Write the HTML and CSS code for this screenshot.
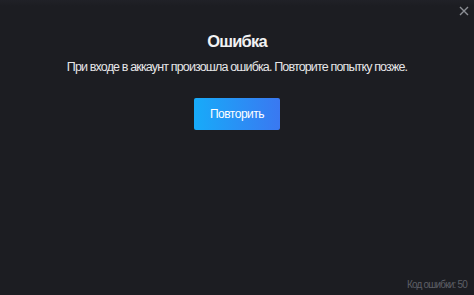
FILE: index.html
```html
<!DOCTYPE html>
<html lang="ru">
<head>
<meta charset="utf-8">
<link rel="stylesheet" href="styles.css">
</head>
<body>
<div class="dialog">
  <button class="close" aria-label="Закрыть">
    <svg width="10" height="10" viewBox="0 0 10 10"><path d="M1 1 L9 9 M9 1 L1 9" stroke="#8c8f95" stroke-width="1.4" fill="none"/></svg>
  </button>
  <div class="content">
    <h1 class="title">Ошибка</h1>
    <p class="message">При входе в аккаунт произошла ошибка. Повторите попытку позже.</p>
    <button class="retry">Повторить</button>
  </div>
  <div class="code">Код ошибки: 50</div>
</div>
</body>
</html>
```
FILE: styles.css
```css
html, body {
  margin: 0;
  padding: 0;
  height: 100%;
}
body {
  background: #1c1d22;
  font-family: "Liberation Sans", Arial, sans-serif;
}
.dialog {
  position: relative;
  height: 295px;
  background: linear-gradient(#202127 0, #1c1d22 6px);
  display: flex;
  flex-direction: column;
}
.close {
  position: absolute;
  top: 5px;
  right: 4px;
  width: 12px;
  height: 12px;
  padding: 0;
  border: 0;
  background: none;
  display: flex;
  align-items: center;
  justify-content: center;
}
.content {
  display: flex;
  flex-direction: column;
  align-items: center;
  padding-top: 32px;
  flex: 1;
}
.title {
  margin: 0;
  font-size: 16.5px;
  font-weight: bold;
  letter-spacing: -0.8px;
  color: #f2f2f3;
  line-height: 19px;
}
.message {
  margin: 8px 0 0;
  font-size: 12.5px;
  letter-spacing: -0.85px;
  color: #e6e6e8;
  line-height: 16px;
}
.retry {
  margin-top: 23px;
  width: 86px;
  height: 32px;
  border: 0;
  border-radius: 2px;
  background: linear-gradient(90deg, #17abf9 0%, #3a78f1 100%);
  color: #ffffff;
  font-family: "Liberation Sans", Arial, sans-serif;
  font-size: 12px;
  letter-spacing: -0.5px;
  padding: 0;
}
.code {
  align-self: flex-end;
  margin: 0 7px 4px 0;
  font-size: 10px;
  letter-spacing: -0.8px;
  color: #5c5f66;
  line-height: 12px;
}
```
